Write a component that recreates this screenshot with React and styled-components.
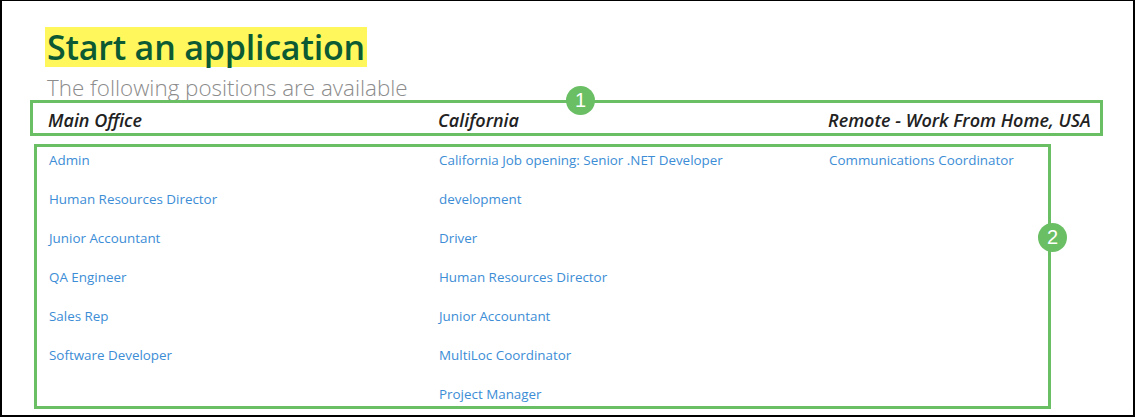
import React from "react";
import styled, { createGlobalStyle } from "styled-components";

const Global = createGlobalStyle`
  html, body { margin: 0; padding: 0; background: #fff; }
  * { box-sizing: border-box; }
`;

const GREEN = "#6abf64";

const Page = styled.div`
  width: 1135px;
  height: 417px;
  border: 1px solid #000;
  border-left-width: 2px;
  border-right-width: 2px;
  border-bottom-width: 2px;
  background: #fff;
  padding: 26px 0 0 28px;
  font-family: "Open Sans", "Noto Sans", sans-serif;
  overflow: hidden;
`;

const Title = styled.h1`
  display: inline-block;
  margin: 0 0 0 15px;
  padding: 0 2px;
  background: #fff75c;
  color: #0b5a33;
  font-family: "Open Sans", sans-serif;
  font-weight: 600;
  font-size: 34px;
  line-height: 40px;
  letter-spacing: -0.2px;
`;

const Subtitle = styled.p`
  margin: 8px 0 0 17px;
  color: #8c8c8c;
  font-family: "Open Sans", sans-serif;
  font-weight: 300;
  font-size: 22.4px;
  line-height: 25px;
  white-space: nowrap;
`;

const Frame = styled.div`
  position: relative;
  border: 3px solid ${GREEN};
`;

const HeaderBox = styled(Frame)`
  width: 1073px;
  height: 36px;
  padding: 4px 0 0 15px;
  display: grid;
  grid-template-columns: 390px 390px 1fr;
  align-items: center;
`;

const ListBox = styled(Frame)`
  width: 1017px;
  height: 265px;
  margin: 8px 0 0 4px;
  padding: 4px 0 0 12px;
  display: grid;
  grid-template-columns: 390px 390px 1fr;
  align-items: start;
`;

const ColHead = styled.div`
  font-family: "Open Sans", sans-serif;
  font-style: italic;
  font-weight: 600;
  font-size: 18px;
  color: #222;
  line-height: 24px;
  white-space: nowrap;
`;

const LinkList = styled.ul`
  list-style: none;
  margin: 0;
  padding: 0;
  display: flex;
  flex-direction: column;
  gap: 20px;
`;

const JobLink = styled.a`
  display: block;
  height: 19px;
  line-height: 19px;
  font-size: 13.4px;
  color: #3c8dd6;
  text-decoration: none;
  white-space: nowrap;
`;

const Badge = styled.span`
  position: absolute;
  width: 29px;
  height: 29px;
  border-radius: 50%;
  background: ${GREEN};
  color: #fff;
  font-family: "Liberation Sans", Arial, sans-serif;
  font-size: 20px;
  line-height: 29px;
  text-align: center;
  ${(p) => p.$pos}
`;

const columns = [
  {
    head: "Main Office",
    jobs: [
      "Admin",
      "Human Resources Director",
      "Junior Accountant",
      "QA Engineer",
      "Sales Rep",
      "Software Developer",
    ],
  },
  {
    head: "California",
    jobs: [
      "California Job opening: Senior .NET Developer",
      "development",
      "Driver",
      "Human Resources Director",
      "Junior Accountant",
      "MultiLoc Coordinator",
      "Project Manager",
    ],
  },
  {
    head: "Remote - Work From Home, USA",
    jobs: ["Communications Coordinator"],
  },
];

export default function App() {
  return (
    <>
      <Global />
      <Page>
        <Title>Start an application</Title>
        <Subtitle>The following positions are available</Subtitle>
        <HeaderBox>
          {columns.map((c) => (
            <ColHead key={c.head}>{c.head}</ColHead>
          ))}
          <Badge $pos="top: -17px; left: 533px;">1</Badge>
        </HeaderBox>
        <ListBox>
          {columns.map((c) => (
            <LinkList key={c.head}>
              {c.jobs.map((j) => (
                <li key={j}>
                  <JobLink href="#">{j}</JobLink>
                </li>
              ))}
            </LinkList>
          ))}
          <Badge $pos="top: 76px; right: -19px;">2</Badge>
        </ListBox>
      </Page>
    </>
  );
}
